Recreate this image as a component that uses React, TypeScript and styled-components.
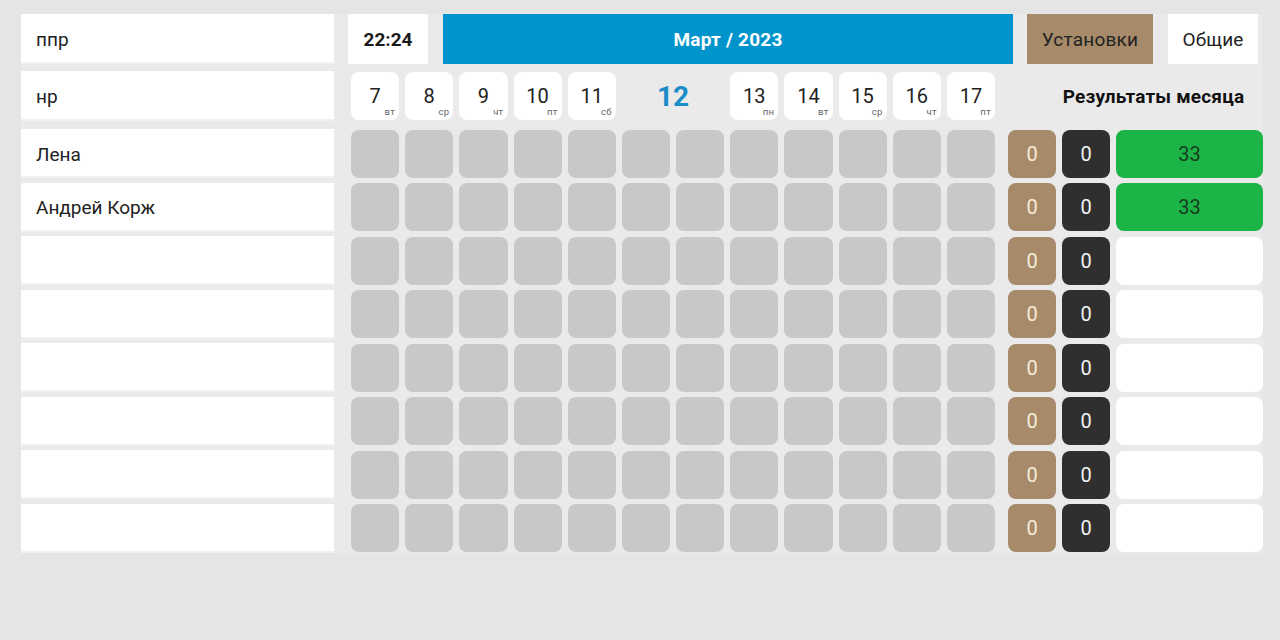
import React from 'react';
import styled, { createGlobalStyle } from 'styled-components';

const GlobalStyle = createGlobalStyle`
  html, body {
    margin: 0;
    padding: 0;
    background: #e5e5e5;
    font-family: Roboto, "Noto Sans", "Liberation Sans", sans-serif;
    color: #222;
  }
`;

interface DayInfo {
  day: number;
  weekday: string;
}

const daysBefore: DayInfo[] = [
  { day: 7, weekday: 'вт' },
  { day: 8, weekday: 'ср' },
  { day: 9, weekday: 'чт' },
  { day: 10, weekday: 'пт' },
  { day: 11, weekday: 'сб' },
];

const daysAfter: DayInfo[] = [
  { day: 13, weekday: 'пн' },
  { day: 14, weekday: 'вт' },
  { day: 15, weekday: 'ср' },
  { day: 16, weekday: 'чт' },
  { day: 17, weekday: 'пт' },
];

interface Worker {
  name: string;
  total: number | null;
}

const workers: Worker[] = [
  { name: 'Лена', total: 33 },
  { name: 'Андрей Корж', total: 33 },
  { name: '', total: null },
  { name: '', total: null },
  { name: '', total: null },
  { name: '', total: null },
  { name: '', total: null },
  { name: '', total: null },
];

const COLUMNS = 12;

export default function App() {
  return (
    <>
      <GlobalStyle />
      <Page>
        <Board>
          <HeaderRow>
            <NameCell>ппр</NameCell>
            <TopBar>
              <Clock>22:24</Clock>
              <MonthBar>Март / 2023</MonthBar>
              <TabButton $active>Установки</TabButton>
              <TabButton>Общие</TabButton>
            </TopBar>
          </HeaderRow>

          <HeaderRow>
            <NameCell>нр</NameCell>
            <DaysGrid>
              {daysBefore.map((d) => (
                <DayHead key={d.day}>
                  {d.day}
                  <Weekday>{d.weekday}</Weekday>
                </DayHead>
              ))}
              <Today>12</Today>
              {daysAfter.map((d) => (
                <DayHead key={d.day}>
                  {d.day}
                  <Weekday>{d.weekday}</Weekday>
                </DayHead>
              ))}
            </DaysGrid>
            <ResultsTitle>Результаты месяца</ResultsTitle>
          </HeaderRow>

          <Rows>
            {workers.map((w, i) => (
              <WorkerRow key={i}>
                <NameCell $compact>{w.name}</NameCell>
                <DaysGrid>
                  {Array.from({ length: COLUMNS }).map((_, c) => (
                    <Slot key={c} />
                  ))}
                </DaysGrid>
                <Results>
                  <Counter $tone="tan">0</Counter>
                  <Counter $tone="dark">0</Counter>
                  <Total $filled={w.total !== null}>{w.total ?? ''}</Total>
                </Results>
              </WorkerRow>
            ))}
          </Rows>
        </Board>
      </Page>
    </>
  );
}

const Page = styled.div`
  width: 1280px;
  height: 640px;
  box-sizing: border-box;
  padding: 14px 0 0 21px;
`;

const Board = styled.div`
  width: 1242px;
  display: flex;
  flex-direction: column;
  background: #eaeaea;
`;

const HeaderRow = styled.div`
  display: flex;
  align-items: center;
  height: 50px;
  margin-bottom: 7px;

  & + & {
    margin-bottom: 8px;
  }
`;

const NameCell = styled.div<{ $compact?: boolean }>`
  flex-shrink: 0;
  width: 313px;
  height: ${(p) => (p.$compact ? '49px' : '50px')};
  box-sizing: border-box;
  padding: 1px 0 0 15px;
  display: flex;
  align-items: center;
  background: #fff;
  box-shadow: inset 0 -2px 0 #f1f1f1;
  font-size: 19px;
  color: #222;
`;

const TopBar = styled.div`
  display: flex;
  align-items: stretch;
  height: 50px;
  margin-left: 14px;
  gap: 15px;
`;

const Clock = styled.div`
  width: 80px;
  display: flex;
  align-items: center;
  justify-content: center;
  background: #fff;
  font-size: 19px;
  font-weight: 700;
  color: #1a1a1a;
`;

const MonthBar = styled.div`
  width: 570px;
  display: flex;
  align-items: center;
  justify-content: center;
  background: #0094cc;
  color: #fff;
  font-size: 19px;
  font-weight: 700;
  letter-spacing: 0.2px;
  margin-right: -1px;
`;

const TabButton = styled.div<{ $active?: boolean }>`
  display: flex;
  align-items: center;
  justify-content: center;
  width: ${(p) => (p.$active ? '126px' : '90px')};
  background: ${(p) => (p.$active ? '#a68a6a' : '#fff')};
  color: #222;
  font-size: 19px;
  letter-spacing: 0.2px;
`;

const DaysGrid = styled.div`
  flex-shrink: 0;
  width: 644px;
  margin-left: 17px;
  display: grid;
  grid-template-columns: repeat(${COLUMNS}, 1fr);
  column-gap: 6px;
`;

const DayHead = styled.div`
  position: relative;
  height: 48px;
  border-radius: 8px;
  background: #fff;
  display: flex;
  align-items: center;
  justify-content: center;
  font-size: 20px;
  color: #222;
`;

const Weekday = styled.span`
  position: absolute;
  right: 4px;
  bottom: 4px;
  font-size: 9.5px;
  color: #666;
  letter-spacing: 0.3px;
  line-height: 1;
`;

const Today = styled.div`
  grid-column: span 2;
  display: flex;
  align-items: center;
  justify-content: center;
  font-size: 28px;
  font-weight: 700;
  color: #1a8dc8;
`;

const ResultsTitle = styled.div`
  flex: 1;
  margin-left: 13px;
  padding-left: 36px;
  text-align: center;
  font-size: 19px;
  font-weight: 700;
  color: #111;
  letter-spacing: 0.2px;
`;

const Rows = styled.div`
  display: flex;
  flex-direction: column;
  gap: 4.5px;
`;

const WorkerRow = styled.div`
  display: flex;
  align-items: center;
  height: 49px;
`;

const Slot = styled.div`
  height: 48px;
  border-radius: 8px;
  background: #c8c8c8;
`;

const Results = styled.div`
  display: flex;
  gap: 6px;
  margin-left: 13px;
  height: 48px;
`;

const Counter = styled.div<{ $tone: 'tan' | 'dark' }>`
  width: 48px;
  border-radius: 8px;
  display: flex;
  align-items: center;
  justify-content: center;
  font-size: 20px;
  background: ${(p) => (p.$tone === 'tan' ? '#a68a6a' : '#2f2f2f')};
  color: ${(p) => (p.$tone === 'tan' ? '#f6edd9' : '#f2f2f2')};
`;

const Total = styled.div<{ $filled: boolean }>`
  width: 147px;
  border-radius: 8px;
  display: flex;
  align-items: center;
  justify-content: center;
  font-size: 20px;
  background: ${(p) => (p.$filled ? '#1cb447' : '#fff')};
  color: #173d1f;
`;
